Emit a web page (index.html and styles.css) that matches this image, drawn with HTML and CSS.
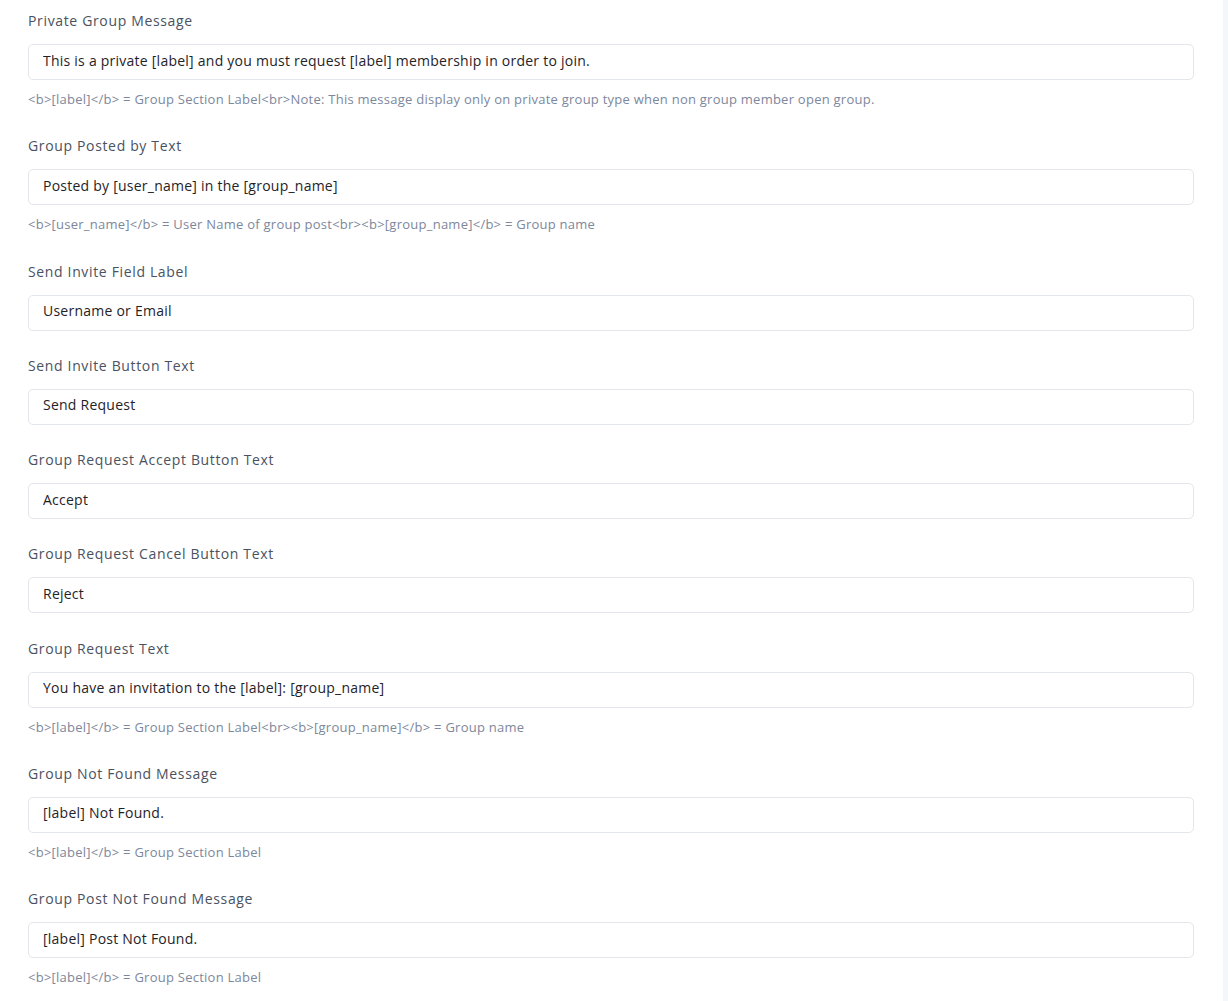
FILE: index.html
```html
<!DOCTYPE html>
<html>
<head>
<meta charset="utf-8">
<link rel="stylesheet" href="styles.css">
</head>
<body>
<div class="panel">
  <div class="group">
    <label class="label">Private Group Message</label>
    <input class="field" type="text" value="This is a private [label] and you must request [label] membership in order to join.">
    <div class="help">&lt;b&gt;[label]&lt;/b&gt; = Group Section Label&lt;br&gt;Note: This message display only on private group type when non group member open group.</div>
  </div>
  <div class="group">
    <label class="label">Group Posted by Text</label>
    <input class="field" type="text" value="Posted by [user_name] in the [group_name]">
    <div class="help">&lt;b&gt;[user_name]&lt;/b&gt; = User Name of group post&lt;br&gt;&lt;b&gt;[group_name]&lt;/b&gt; = Group name</div>
  </div>
  <div class="group">
    <label class="label">Send Invite Field Label</label>
    <input class="field" type="text" value="Username or Email">
  </div>
  <div class="group">
    <label class="label">Send Invite Button Text</label>
    <input class="field" type="text" value="Send Request">
  </div>
  <div class="group">
    <label class="label">Group Request Accept Button Text</label>
    <input class="field" type="text" value="Accept">
  </div>
  <div class="group">
    <label class="label">Group Request Cancel Button Text</label>
    <input class="field" type="text" value="Reject">
  </div>
  <div class="group">
    <label class="label">Group Request Text</label>
    <input class="field" type="text" value="You have an invitation to the [label]: [group_name]">
    <div class="help">&lt;b&gt;[label]&lt;/b&gt; = Group Section Label&lt;br&gt;&lt;b&gt;[group_name]&lt;/b&gt; = Group name</div>
  </div>
  <div class="group">
    <label class="label">Group Not Found Message</label>
    <input class="field" type="text" value="[label] Not Found.">
    <div class="help">&lt;b&gt;[label]&lt;/b&gt; = Group Section Label</div>
  </div>
  <div class="group">
    <label class="label">Group Post Not Found Message</label>
    <input class="field" type="text" value="[label] Post Not Found.">
    <div class="help">&lt;b&gt;[label]&lt;/b&gt; = Group Section Label</div>
  </div>
</div>
</body>
</html>
```
FILE: styles.css
```css
html, body {
  margin: 0;
  padding: 0;
  background: #f3f6fb;
  font-family: "Open Sans", "Noto Sans", sans-serif;
}
.panel {
  width: 1223px;
  box-sizing: border-box;
  background: #ffffff;
  padding: 10px 29px 0 28px;
  min-height: 1001px;
}
.group {
  display: flex;
  flex-direction: column;
  margin-bottom: 24.25px;
}
.label {
  display: block;
  font-size: 14px;
  line-height: 22px;
  letter-spacing: 0.65px;
  color: #4a5261;
  margin-bottom: 12px;
}
.field {
  display: block;
  box-sizing: border-box;
  width: 100%;
  height: 36px;
  margin: 0;
  padding: 0 14px 4px;
  border: 1px solid #e3e6ea;
  border-radius: 5px;
  background: #ffffff;
  font-family: inherit;
  font-size: 14px;
  letter-spacing: 0.24px;
  color: #1f2328;
  outline: none;
}
.help {
  margin-top: 9px;
  margin-bottom: 1px;
  font-size: 13px;
  line-height: 21px;
  letter-spacing: 0.25px;
  color: #7d879c;
}
```
